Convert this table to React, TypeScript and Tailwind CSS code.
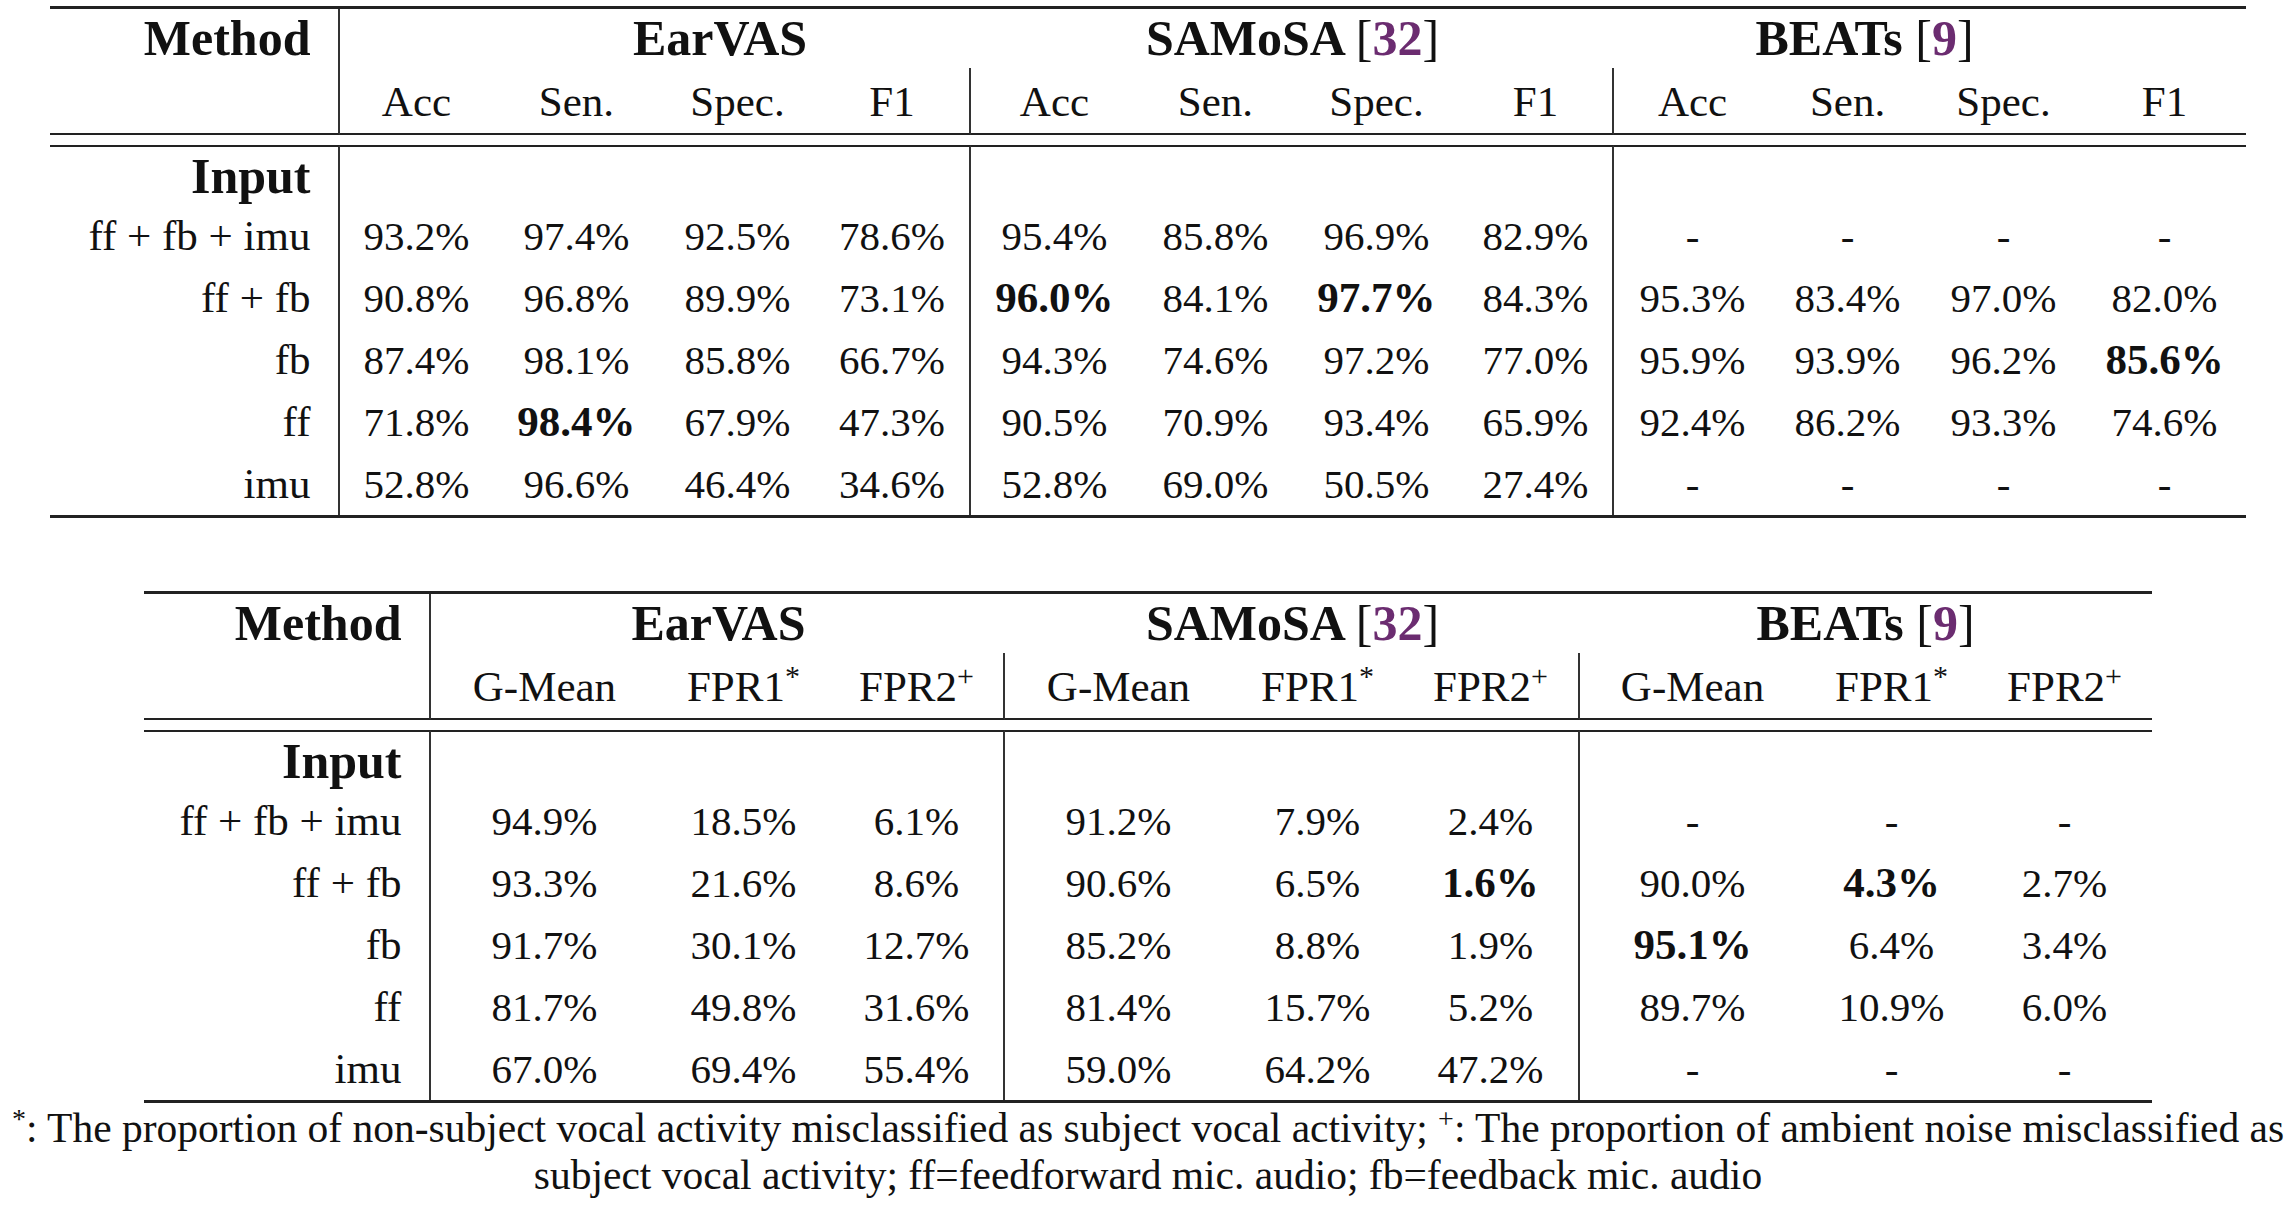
import type { ReactNode } from 'react';

type Val = string | { v: string; b: true };
type Row = { label: string; vals: Val[] };

const B = (v: string): Val => ({ v, b: true });

const rows1: Row[] = [
  { label: 'ff + fb + imu', vals: ['93.2%', '97.4%', '92.5%', '78.6%', '95.4%', '85.8%', '96.9%', '82.9%', '-', '-', '-', '-'] },
  { label: 'ff + fb', vals: ['90.8%', '96.8%', '89.9%', '73.1%', B('96.0%'), '84.1%', B('97.7%'), '84.3%', '95.3%', '83.4%', '97.0%', '82.0%'] },
  { label: 'fb', vals: ['87.4%', '98.1%', '85.8%', '66.7%', '94.3%', '74.6%', '97.2%', '77.0%', '95.9%', '93.9%', '96.2%', B('85.6%')] },
  { label: 'ff', vals: ['71.8%', B('98.4%'), '67.9%', '47.3%', '90.5%', '70.9%', '93.4%', '65.9%', '92.4%', '86.2%', '93.3%', '74.6%'] },
  { label: 'imu', vals: ['52.8%', '96.6%', '46.4%', '34.6%', '52.8%', '69.0%', '50.5%', '27.4%', '-', '-', '-', '-'] },
];

const rows2: Row[] = [
  { label: 'ff + fb + imu', vals: ['94.9%', '18.5%', '6.1%', '91.2%', '7.9%', '2.4%', '-', '-', '-'] },
  { label: 'ff + fb', vals: ['93.3%', '21.6%', '8.6%', '90.6%', '6.5%', B('1.6%'), '90.0%', B('4.3%'), '2.7%'] },
  { label: 'fb', vals: ['91.7%', '30.1%', '12.7%', '85.2%', '8.8%', '1.9%', B('95.1%'), '6.4%', '3.4%'] },
  { label: 'ff', vals: ['81.7%', '49.8%', '31.6%', '81.4%', '15.7%', '5.2%', '89.7%', '10.9%', '6.0%'] },
  { label: 'imu', vals: ['67.0%', '69.4%', '55.4%', '59.0%', '64.2%', '47.2%', '-', '-', '-'] },
];

const fpr1 = (
  <>
    FPR1<sup className="text-[30px]">*</sup>
  </>
);
const fpr2 = (
  <>
    FPR2<sup className="text-[30px]">+</sup>
  </>
);

const sub1: ReactNode[] = ['Acc', 'Sen.', 'Spec.', 'F1', 'Acc', 'Sen.', 'Spec.', 'F1', 'Acc', 'Sen.', 'Spec.', 'F1'];
const sub2: ReactNode[] = ['G-Mean', fpr1, fpr2, 'G-Mean', fpr1, fpr2, 'G-Mean', fpr1, fpr2];

const VLINE = 'border-r-2 border-r-[#333]';
const HRULE = 'border-[#222]';

function Cite({ n }: { n: string }) {
  return (
    <span className="font-normal">
      [<span className="font-bold text-[#6b2c70]">{n}</span>]
    </span>
  );
}

function ResultTable({
  widths,
  sub,
  rows,
  per,
  shiftFirst,
  shiftLast,
}: {
  widths: number[];
  sub: ReactNode[];
  rows: Row[];
  per: number;
  shiftFirst?: string;
  shiftLast?: string;
}) {
  const total = widths.reduce((a, b) => a + b, 0);
  const ends = [per - 1, per * 2 - 1];
  return (
    <table
      className={`table-fixed border-separate border-spacing-0 border-t-[3px] border-b-[3px] ${HRULE}`}
      style={{ width: total }}
    >
      <colgroup>
        {widths.map((w, i) => (
          <col key={i} style={{ width: w }} />
        ))}
      </colgroup>
      <thead>
        <tr>
          <th className={`p-0 pr-[28px] text-right text-[50px] leading-[59px] font-bold ${VLINE}`}>Method</th>
          <th colSpan={per} className={`p-0 text-center text-[50px] leading-[59px] font-bold ${shiftFirst ?? ''}`}>
            EarVAS
          </th>
          <th colSpan={per} className="p-0 text-center text-[50px] leading-[59px] font-bold">
            SAMoSA <Cite n="32" />
          </th>
          <th colSpan={per} className={`p-0 text-center text-[50px] leading-[59px] font-bold ${shiftLast ?? ''}`}>
            BEATs <Cite n="9" />
          </th>
        </tr>
        <tr>
          <th className={`p-0 pt-[2px] leading-[63px] border-b-2 ${HRULE} ${VLINE}`} />
          {sub.map((s, i) => (
            <th
              key={i}
              className={`p-0 pt-[2px] text-center text-[43px] leading-[63px] font-normal whitespace-nowrap border-b-2 ${HRULE} ${
                ends.includes(i) ? VLINE : ''
              }`}
            >
              {s}
            </th>
          ))}
        </tr>
      </thead>
      <tbody>
        <tr>
          <td colSpan={widths.length} className="h-[10px] p-0" />
        </tr>
        <tr>
          <td className={`p-0 pr-[28px] text-right text-[50px] leading-[58px] font-bold border-t-2 ${HRULE} ${VLINE}`}>
            Input
          </td>
          {sub.map((_, i) => (
            <td key={i} className={`p-0 border-t-2 ${HRULE} ${ends.includes(i) ? VLINE : ''}`} />
          ))}
        </tr>
        {rows.map((r) => (
          <tr key={r.label}>
            <td className={`p-0 pr-[28px] text-right text-[43px] leading-[62px] whitespace-nowrap ${VLINE}`}>
              {r.label}
            </td>
            {r.vals.map((v, i) => (
              <td
                key={i}
                className={`p-0 text-center leading-[62px] whitespace-nowrap ${
                  typeof v === 'string' ? 'text-[41px]' : 'text-[43px] font-bold'
                } ${ends.includes(i) ? VLINE : ''}`}
              >
                {typeof v === 'string' ? v : v.v}
              </td>
            ))}
          </tr>
        ))}
      </tbody>
    </table>
  );
}

export default function App() {
  return (
    <div className="w-[2296px] h-[1208px] overflow-hidden bg-white text-[#111] font-['Liberation_Serif',serif] flex flex-col items-center pt-[6px]">
      <ResultTable
        widths={[290, 152, 168, 154, 157, 166, 156, 166, 154, 158, 152, 160, 162]}
        sub={sub1}
        rows={rows1}
        per={4}
        shiftFirst="pl-[128px]"
        shiftLast="pr-[130px]"
      />
      <div className="mt-[73px]">
        <ResultTable
          widths={[287, 226, 172, 176, 226, 172, 176, 226, 172, 174]}
          sub={sub2}
          rows={rows2}
          per={3}
        />
      </div>
      <p className="mt-[2px] text-center text-[41.5px] leading-[47px] whitespace-nowrap">
        <sup className="text-[28px]">*</sup>: The proportion of non-subject vocal activity misclassified as subject vocal
        activity; <sup className="text-[28px]">+</sup>: The proportion of ambient noise misclassified as
        <br />
        subject vocal activity; ff=feedforward mic. audio; fb=feedback mic. audio
      </p>
    </div>
  );
}
